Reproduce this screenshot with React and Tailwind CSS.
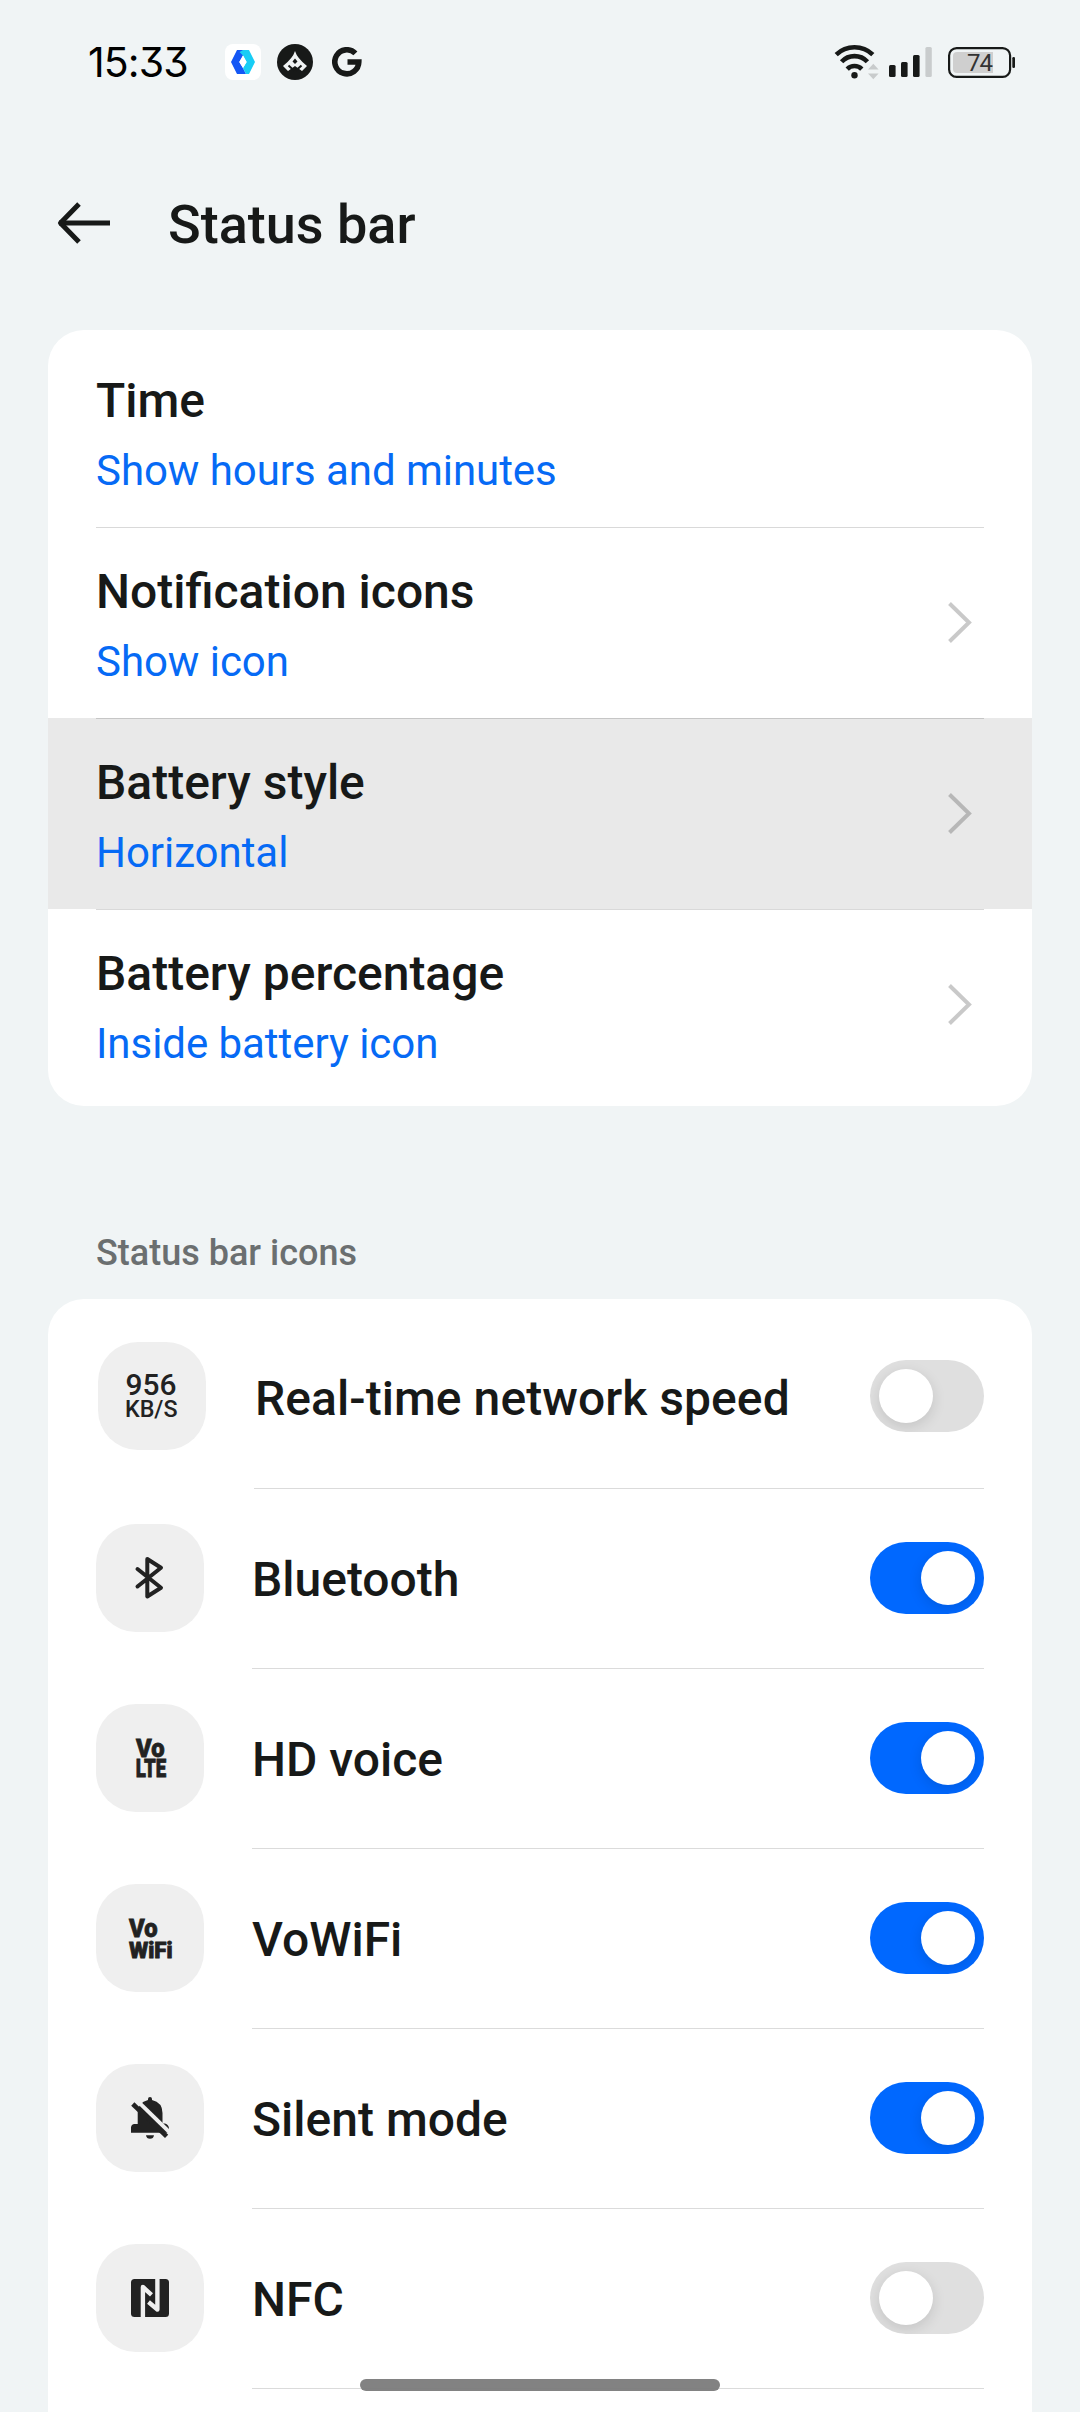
import React, { useState } from 'react';

const ChevronIcon = () => (
  <svg className="w-[25px] h-[43px] mr-[60px] mb-0.5 shrink-0" viewBox="0 0 25 43" fill="none">
    <path d="M2.5 2.5L22 21.5L2.5 40.5" stroke="#000" strokeOpacity="0.21" strokeWidth="4" />
  </svg>
);

const BackIcon = () => (
  <svg className="w-[54px] h-[42px]" viewBox="0 0 54 42" fill="none" stroke="#171918" strokeWidth="5">
    <path d="M3 21H54" />
    <path d="M23 2L4.5 21L23 40" strokeLinejoin="round" />
  </svg>
);

const WifiIcon = () => (
  <svg className="w-[46px] h-9" viewBox="0 0 46 36" fill="none">
    <g stroke="#171918" strokeWidth="4.6">
      <path d="M2.2 10.6A26.5 26.5 0 0 1 38.8 10.6" />
      <path d="M7.6 17.8A17.5 17.5 0 0 1 33.4 17.8" />
      <path d="M13.2 25.1A10.2 10.2 0 0 1 27.8 25.1" />
    </g>
    <circle cx="20.5" cy="31.2" r="3.2" fill="#171918" />
    <path d="M34 25.5L39.3 19.8L44.6 25.5Z M34 29.5L39.3 35.2L44.6 29.5Z" fill="#c8cbcc" />
  </svg>
);

const SignalIcon = () => (
  <svg className="w-[43px] h-[30px]" viewBox="0 0 43 30" fill="#171918">
    <rect x="0" y="18" width="6.6" height="12" rx="1.5" />
    <rect x="12" y="15" width="6.6" height="15" rx="1.5" />
    <rect x="24" y="8" width="6.6" height="22" rx="1.5" />
    <rect x="36.4" y="0" width="6.4" height="30" rx="1.5" fill="#c9cccd" />
  </svg>
);

const BatteryIcon = () => (
  <svg className="w-[68px] h-[31px]" viewBox="0 0 68 31" fill="none">
    <path d="M9 5H45V26H9Q5 26 5 22V9Q5 5 9 5Z" fill="#cfcfcf" />
    <rect x="1.1" y="1.1" width="61" height="28.8" rx="7.5" stroke="#171918" strokeWidth="2.2" />
    <rect x="64.3" y="10" width="2.7" height="11" rx="1.2" fill="#171918" />
    <text x="19" y="24" fontSize="24" textLength="26" fill="#333" className="font-['Roboto',sans-serif]">
      74
    </text>
  </svg>
);

const StatusBar = () => (
  <div className="h-[124px] flex items-center justify-between pl-[88px] pr-[64px]">
    <div className="flex items-center">
      <span className="w-[137px] pt-px text-[41px] leading-none tracking-[-0.9px] font-['Inter',sans-serif] [font-feature-settings:'cv09']">
        15:33
      </span>
      <svg className="w-9 h-9" viewBox="0 0 36 36">
        <rect width="36" height="36" rx="8" fill="#fff" />
        <path d="M12 6H24L18 11.5L14.3 18L18 24L21 30H12L6 18Z" fill="#1457f5" />
        <path d="M18 6H24L30 18L24 30H21L18 24L21.6 18L18 11.5L14.5 8Z" fill="#18cdf5" />
        <path d="M18 11.5L21.6 18L18 24L14.3 18Z" fill="#fff" />
      </svg>
      <svg className="w-9 h-9 ml-4" viewBox="0 0 36 36">
        <circle cx="18" cy="18" r="18" fill="#171918" />
        <path d="M18 7Q20 14 30 22L25 27L18 22L11 27L6 22Q16 14 18 7Z" fill="#f0f3f4" />
        <path d="M18 14.5L20.5 17.5L18 20L15.5 17.5Z" fill="#171918" />
        <path d="M11.5 21.5L17 26.5M24.5 21.5L19 26.5" stroke="#171918" strokeWidth="2" />
      </svg>
      <svg className="w-[30px] h-[30px] ml-[19px]" viewBox="0 0 30 30" fill="none">
        <path d="M23.4 6.4A12 12 0 1 0 26.8 15H15.5" stroke="#171918" strokeWidth="5.6" />
      </svg>
    </div>
    <div className="flex items-center">
      <WifiIcon />
      <div className="ml-[9px]">
        <SignalIcon />
      </div>
      <div className="ml-4">
        <BatteryIcon />
      </div>
    </div>
  </div>
);

const options = [
  { title: 'Time', value: 'Show hours and minutes' },
  { title: 'Notification icons', value: 'Show icon', chevron: true },
  { title: 'Battery style', value: 'Horizontal', chevron: true, pressed: true },
  { title: 'Battery percentage', value: 'Inside battery icon', chevron: true },
];

const OptionRow = ({ option, first }) => (
  <div className={`h-[191px] flex flex-col ${option.pressed ? 'bg-[#e9e9e9]' : ''}`}>
    <div className={`h-px mx-12 shrink-0 ${first ? '' : 'bg-black/15'}`} />
    <div className="flex-1 flex items-center justify-between">
      <div className="pl-12 pt-1.5">
        <p className="text-5xl leading-[64px] font-medium text-[#171918]">{option.title}</p>
        <p className="mt-2 text-[42px] leading-[60px] tracking-[-0.05px] text-[#066af5]">{option.value}</p>
      </div>
      {option.chevron && <ChevronIcon />}
    </div>
  </div>
);

// Two stacked lines of text inside a tile
const StackedLabel = ({ lines, heavy }) => (
  <text stroke="#222" strokeWidth={heavy ? 0.8 : 0}>
    {lines.map((line) => (
      <tspan
        key={line.text}
        x={line.x}
        y={line.y}
        fontSize={line.size}
        fontWeight={line.weight}
        textLength={line.width}
        lengthAdjust="spacingAndGlyphs"
      >
        {line.text}
      </tspan>
    ))}
  </text>
);

const SpeedIcon = () => (
  <StackedLabel
    lines={[
      { text: '956', x: 27.5, y: 53, size: 30, weight: 500, width: 51 },
      { text: 'KB/S', x: 27, y: 75, size: 23.5, weight: 500, width: 52.5 },
    ]}
  />
);

const BluetoothIcon = () => (
  <path
    d="M41.5 45L65 63.7L51.3 72.5V35L65 43.7L41.5 62.5"
    fill="none"
    stroke="#222"
    strokeWidth="4"
    strokeLinecap="round"
    strokeLinejoin="round"
  />
);

const VolteIcon = () => (
  <StackedLabel
    heavy
    lines={[
      { text: 'Vo', x: 40, y: 52.8, size: 26.5, weight: 900, width: 28.5 },
      { text: 'LTE', x: 39.7, y: 73.2, size: 26.5, weight: 900, width: 30.5 },
    ]}
  />
);

const VowifiIcon = () => (
  <StackedLabel
    heavy
    lines={[
      { text: 'Vo', x: 33, y: 53, size: 26.5, weight: 900, width: 28.5 },
      { text: 'WiFi', x: 33, y: 73.5, size: 21.5, weight: 900, width: 43.5 },
    ]}
  />
);

const BellOffIcon = () => (
  <>
    <path d="M52 36V35Q52 33 54 33Q56 33 56 35V36Q66.5 38.5 66.5 49V59.5H69Q73 60.5 73 65V68.7H35V63.5Q35.3 60.3 38.5 60H41.7V48Q42 38.5 52 36Z" />
    <path d="M50 71.2H58Q57.5 74.8 54 74.8Q50.5 74.8 50 71.2Z" />
    <path d="M39 34.6L76 70.6" stroke="#efefef" strokeWidth="4" />
    <path d="M36.8 40L70.6 72.4" stroke="#222" strokeWidth="4.6" />
  </>
);

const NfcIcon = () => (
  <>
    <rect x="35" y="35" width="38" height="38" rx="3.5" />
    <g fill="none" stroke="#efefef" strokeWidth="4.4" strokeLinejoin="round">
      <path d="M46.9 74V43L55.5 50.8" />
      <path d="M61.4 34V65.5L52.5 58" />
    </g>
  </>
);

const icons = [
  { name: 'Real-time network speed', Icon: SpeedIcon, on: false },
  { name: 'Bluetooth', Icon: BluetoothIcon, on: true },
  { name: 'HD voice', Icon: VolteIcon, on: true },
  { name: 'VoWiFi', Icon: VowifiIcon, on: true },
  { name: 'Silent mode', Icon: BellOffIcon, on: true },
  { name: 'NFC', Icon: NfcIcon, on: false },
];

const Toggle = ({ on, onClick }) => (
  <button
    className={`w-[114px] h-[72px] mb-0.5 rounded-full px-[9px] flex items-center overflow-hidden ${
      on ? 'bg-[#0068ff] justify-end' : 'bg-[#dfdfdf] justify-start'
    }`}
    onClick={onClick}
  >
    <span className="w-[54px] h-[54px] rounded-full bg-white shadow-[0_4px_14px_rgba(0,0,0,0.12)]" />
  </button>
);

const IconRow = ({ item, first }) => {
  const [on, setOn] = useState(item.on);
  const { Icon } = item;

  return (
    <div className={`flex pr-12 ${first ? 'h-[184px] pl-[50px]' : 'h-[180px] pl-12'}`}>
      <div className={first ? 'pt-[37px]' : 'pt-[35px]'}>
        <svg
          className="w-[108px] h-[108px] rounded-[40px] bg-[#efefef] font-['Roboto',sans-serif]"
          viewBox="0 0 108 108"
          fill="#222"
        >
          <Icon />
        </svg>
      </div>
      <div className="flex-1 ml-12 border-b border-[#dbdbdb] flex items-center justify-between">
        <p
          className={`text-5xl leading-[64px] font-medium text-[#171918] ${
            first ? 'pt-1 pl-px tracking-[0.06px]' : 'pt-0.5'
          }`}
        >
          {item.name}
        </p>
        <Toggle on={on} onClick={() => setOn(!on)} />
      </div>
    </div>
  );
};

const App = () => {
  return (
    <div className="relative w-[1080px] h-[2412px] overflow-hidden bg-[#f0f4f5] font-['Roboto',sans-serif]">
      <StatusBar />

      <header className="h-[206px] flex items-start pl-14 pt-[67px]">
        <div className="pt-[11px]">
          <BackIcon />
        </div>
        <h1 className="ml-[58px] pt-0.5 text-[54px] leading-[64px] font-medium text-[#171918]">Status bar</h1>
      </header>

      <section className="mx-12 py-1.5 bg-white rounded-[36px]">
        {options.map((option, i) => (
          <OptionRow key={option.title} option={option} first={i === 0} />
        ))}
      </section>

      <h2 className="mt-[123px] ml-24 h-[70px] text-4xl leading-[48px] font-medium text-[#6b6f70]">
        Status bar icons
      </h2>

      <section className="mx-12 pt-1.5 h-[1200px] bg-white rounded-t-[36px]">
        {icons.map((item, i) => (
          <IconRow key={item.name} item={item} first={i === 0} />
        ))}
      </section>

      {/* Gesture bar */}
      <div className="absolute left-[360px] bottom-[21px] w-[360px] h-3 rounded-full bg-[#7b7b7b]/95" />
    </div>
  );
};

export default App;
